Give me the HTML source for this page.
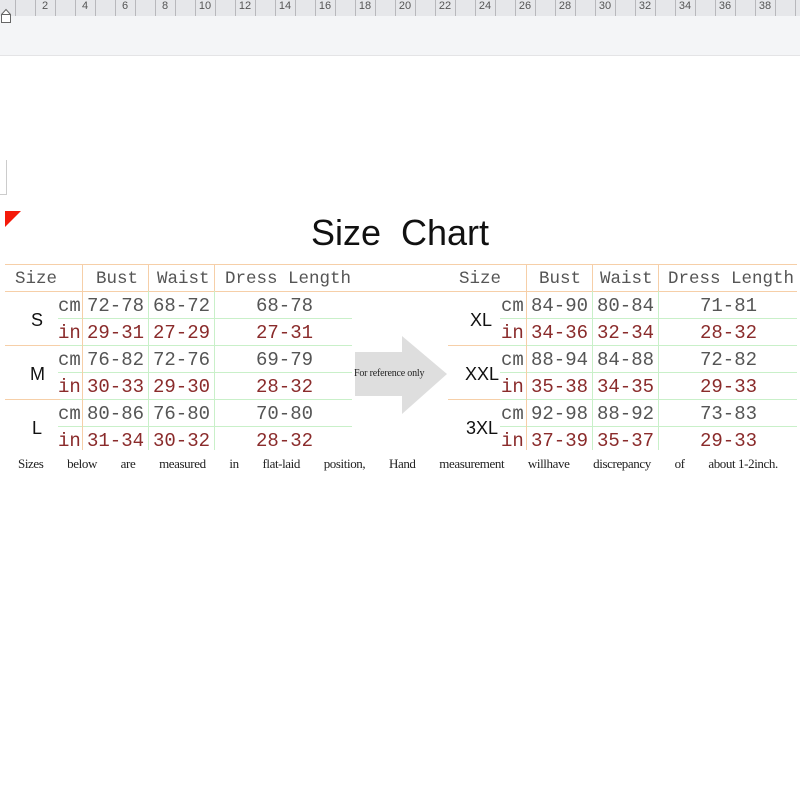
<!DOCTYPE html>
<html><head><meta charset="utf-8"><style>
body{margin:0;width:800px;height:800px;background:#fff;position:relative;overflow:hidden;font-family:"Liberation Mono",monospace}
.a{position:absolute;white-space:nowrap;line-height:1}
.m{font-size:19px;color:#555}
.hd{font-size:17.5px;color:#555}
.r{color:#8a2b2b}
.s{font-family:"Liberation Sans",sans-serif;font-size:18px;color:#111}
.h{position:absolute;height:1px}
.v{position:absolute;width:1px}
</style></head><body>
<div style="position:absolute;left:0;top:0;width:800px;height:16px;background:#e6e7ea"></div>
<div style="position:absolute;left:0;top:16px;width:800px;height:39px;background:#f4f5f7;border-bottom:1px solid #e4e4e6"></div>
<svg class="a" style="left:0;top:0" width="800" height="24">
<g stroke="#b8b8bc" stroke-width="1">
<line x1="15.5" y1="0" x2="15.5" y2="16"/><line x1="35.5" y1="0" x2="35.5" y2="16"/><line x1="55.5" y1="0" x2="55.5" y2="16"/><line x1="75.5" y1="0" x2="75.5" y2="16"/><line x1="95.5" y1="0" x2="95.5" y2="16"/><line x1="115.5" y1="0" x2="115.5" y2="16"/><line x1="135.5" y1="0" x2="135.5" y2="16"/><line x1="155.5" y1="0" x2="155.5" y2="16"/><line x1="175.5" y1="0" x2="175.5" y2="16"/><line x1="195.5" y1="0" x2="195.5" y2="16"/><line x1="215.5" y1="0" x2="215.5" y2="16"/><line x1="235.5" y1="0" x2="235.5" y2="16"/><line x1="255.5" y1="0" x2="255.5" y2="16"/><line x1="275.5" y1="0" x2="275.5" y2="16"/><line x1="295.5" y1="0" x2="295.5" y2="16"/><line x1="315.5" y1="0" x2="315.5" y2="16"/><line x1="335.5" y1="0" x2="335.5" y2="16"/><line x1="355.5" y1="0" x2="355.5" y2="16"/><line x1="375.5" y1="0" x2="375.5" y2="16"/><line x1="395.5" y1="0" x2="395.5" y2="16"/><line x1="415.5" y1="0" x2="415.5" y2="16"/><line x1="435.5" y1="0" x2="435.5" y2="16"/><line x1="455.5" y1="0" x2="455.5" y2="16"/><line x1="475.5" y1="0" x2="475.5" y2="16"/><line x1="495.5" y1="0" x2="495.5" y2="16"/><line x1="515.5" y1="0" x2="515.5" y2="16"/><line x1="535.5" y1="0" x2="535.5" y2="16"/><line x1="555.5" y1="0" x2="555.5" y2="16"/><line x1="575.5" y1="0" x2="575.5" y2="16"/><line x1="595.5" y1="0" x2="595.5" y2="16"/><line x1="615.5" y1="0" x2="615.5" y2="16"/><line x1="635.5" y1="0" x2="635.5" y2="16"/><line x1="655.5" y1="0" x2="655.5" y2="16"/><line x1="675.5" y1="0" x2="675.5" y2="16"/><line x1="695.5" y1="0" x2="695.5" y2="16"/><line x1="715.5" y1="0" x2="715.5" y2="16"/><line x1="735.5" y1="0" x2="735.5" y2="16"/><line x1="755.5" y1="0" x2="755.5" y2="16"/><line x1="775.5" y1="0" x2="775.5" y2="16"/><line x1="795.5" y1="0" x2="795.5" y2="16"/>
</g>
<g font-family="Liberation Sans,sans-serif" font-size="11" fill="#555" text-anchor="middle">
<text x="45" y="9">2</text><text x="85" y="9">4</text><text x="125" y="9">6</text><text x="165" y="9">8</text><text x="205" y="9">10</text><text x="245" y="9">12</text><text x="285" y="9">14</text><text x="325" y="9">16</text><text x="365" y="9">18</text><text x="405" y="9">20</text><text x="445" y="9">22</text><text x="485" y="9">24</text><text x="525" y="9">26</text><text x="565" y="9">28</text><text x="605" y="9">30</text><text x="645" y="9">32</text><text x="685" y="9">34</text><text x="725" y="9">36</text><text x="765" y="9">38</text>
</g>
<path d="M1.5 22.5V14.5L6 9.5L10.5 14.5V22.5Z M1.5 14.5H10.5" fill="#fff" stroke="#666"/>
</svg>
<svg class="a" style="left:0;top:150px" width="30" height="80"><path d="M6.5 10V44.5H0" stroke="#ccc" fill="none"/><path d="M5 61H21L5 77Z" fill="#f41a0a"/></svg>

<div class="a" style="left:0;width:800px;top:215px;text-align:center;font-family:'Liberation Sans',sans-serif;font-size:36px;color:#111">Size&nbsp; Chart</div>

<div class="h" style="left:5px;top:264px;width:792px;background:#f6cfa8"></div>
<div class="h" style="left:5px;top:291px;width:792px;background:#f6cfa8"></div>
<div class="h" style="left:58px;top:318px;width:294px;background:#c9f0c9"></div>
<div class="h" style="left:5px;top:345px;width:55px;background:#f6cfa8"></div>
<div class="h" style="left:60px;top:345px;width:292px;background:#c9f0c9"></div>
<div class="h" style="left:58px;top:372px;width:294px;background:#c9f0c9"></div>
<div class="h" style="left:5px;top:399px;width:55px;background:#f6cfa8"></div>
<div class="h" style="left:60px;top:399px;width:292px;background:#c9f0c9"></div>
<div class="h" style="left:58px;top:426px;width:294px;background:#c9f0c9"></div>
<div class="v" style="left:82px;top:264px;height:186px;background:#f6cfa8"></div>
<div class="v" style="left:148px;top:264px;height:27px;background:#f6cfa8"></div>
<div class="v" style="left:148px;top:291px;height:159px;background:#c9f0c9"></div>
<div class="v" style="left:214px;top:264px;height:27px;background:#f6cfa8"></div>
<div class="v" style="left:214px;top:291px;height:159px;background:#c9f0c9"></div>

<div class="h" style="left:500px;top:318px;width:297px;background:#c9f0c9"></div>
<div class="h" style="left:448px;top:345px;width:52px;background:#f6cfa8"></div>
<div class="h" style="left:500px;top:345px;width:297px;background:#c9f0c9"></div>
<div class="h" style="left:500px;top:372px;width:297px;background:#c9f0c9"></div>
<div class="h" style="left:448px;top:399px;width:52px;background:#f6cfa8"></div>
<div class="h" style="left:500px;top:399px;width:297px;background:#c9f0c9"></div>
<div class="h" style="left:500px;top:426px;width:297px;background:#c9f0c9"></div>
<div class="v" style="left:526px;top:264px;height:186px;background:#f6cfa8"></div>
<div class="v" style="left:592px;top:264px;height:27px;background:#f6cfa8"></div>
<div class="v" style="left:592px;top:291px;height:159px;background:#c9f0c9"></div>
<div class="v" style="left:658px;top:264px;height:27px;background:#f6cfa8"></div>
<div class="v" style="left:658px;top:291px;height:159px;background:#c9f0c9"></div>

<svg class="a" style="left:352px;top:334px" width="100" height="82"><path d="M3 18H50V2L95 40L50 80V62H3Z" fill="#dedede"/></svg>
<div class="a" style="left:354px;top:369px;font-family:'Liberation Serif',serif;font-size:10px;color:#222;letter-spacing:-0.2px">For reference only</div>

<div class="a hd" style="left:15px;top:271px">Size</div>
<div class="a hd" style="left:96px;top:271px">Bust</div>
<div class="a hd" style="left:157px;top:271px">Waist</div>
<div class="a hd" style="left:225px;top:271px">Dress Length</div>
<div class="a s" style="left:31px;top:311px">S</div>
<div class="a s" style="left:30px;top:365px">M</div>
<div class="a s" style="left:32px;top:419px">L</div>

<div class="a m" style="left:58px;top:297px">cm</div><div class="a m" style="left:87px;top:297px">72-78</div><div class="a m" style="left:153px;top:297px">68-72</div><div class="a m" style="left:256px;top:297px">68-78</div>
<div class="a m r" style="left:58px;top:324px">in</div><div class="a m r" style="left:87px;top:324px">29-31</div><div class="a m r" style="left:153px;top:324px">27-29</div><div class="a m r" style="left:256px;top:324px">27-31</div>
<div class="a m" style="left:58px;top:351px">cm</div><div class="a m" style="left:87px;top:351px">76-82</div><div class="a m" style="left:153px;top:351px">72-76</div><div class="a m" style="left:256px;top:351px">69-79</div>
<div class="a m r" style="left:58px;top:378px">in</div><div class="a m r" style="left:87px;top:378px">30-33</div><div class="a m r" style="left:153px;top:378px">29-30</div><div class="a m r" style="left:256px;top:378px">28-32</div>
<div class="a m" style="left:58px;top:405px">cm</div><div class="a m" style="left:87px;top:405px">80-86</div><div class="a m" style="left:153px;top:405px">76-80</div><div class="a m" style="left:256px;top:405px">70-80</div>
<div class="a m r" style="left:58px;top:432px">in</div><div class="a m r" style="left:87px;top:432px">31-34</div><div class="a m r" style="left:153px;top:432px">30-32</div><div class="a m r" style="left:256px;top:432px">28-32</div>

<div class="a hd" style="left:459px;top:271px">Size</div>
<div class="a hd" style="left:539px;top:271px">Bust</div>
<div class="a hd" style="left:600px;top:271px">Waist</div>
<div class="a hd" style="left:668px;top:271px">Dress Length</div>
<div class="a s" style="left:470px;top:311px">XL</div>
<div class="a s" style="left:465px;top:365px">XXL</div>
<div class="a s" style="left:466px;top:419px">3XL</div>

<div class="a m" style="left:501px;top:297px">cm</div><div class="a m" style="left:531px;top:297px">84-90</div><div class="a m" style="left:597px;top:297px">80-84</div><div class="a m" style="left:700px;top:297px">71-81</div>
<div class="a m r" style="left:501px;top:324px">in</div><div class="a m r" style="left:531px;top:324px">34-36</div><div class="a m r" style="left:597px;top:324px">32-34</div><div class="a m r" style="left:700px;top:324px">28-32</div>
<div class="a m" style="left:501px;top:351px">cm</div><div class="a m" style="left:531px;top:351px">88-94</div><div class="a m" style="left:597px;top:351px">84-88</div><div class="a m" style="left:700px;top:351px">72-82</div>
<div class="a m r" style="left:501px;top:378px">in</div><div class="a m r" style="left:531px;top:378px">35-38</div><div class="a m r" style="left:597px;top:378px">34-35</div><div class="a m r" style="left:700px;top:378px">29-33</div>
<div class="a m" style="left:501px;top:405px">cm</div><div class="a m" style="left:531px;top:405px">92-98</div><div class="a m" style="left:597px;top:405px">88-92</div><div class="a m" style="left:700px;top:405px">73-83</div>
<div class="a m r" style="left:501px;top:432px">in</div><div class="a m r" style="left:531px;top:432px">37-39</div><div class="a m r" style="left:597px;top:432px">35-37</div><div class="a m r" style="left:700px;top:432px">29-33</div>

<div class="a" style="left:18px;top:457px;width:760px;font-family:'Liberation Serif',serif;font-size:13px;color:#222;display:flex;justify-content:space-between;letter-spacing:-0.4px">
<span>Sizes</span><span>below</span><span>are</span><span>measured</span><span>in</span><span>flat-laid</span><span>position,</span><span>Hand</span><span>measurement</span><span>willhave</span><span>discrepancy</span><span>of</span><span>about 1-2inch.</span>
</div>
</body></html>
